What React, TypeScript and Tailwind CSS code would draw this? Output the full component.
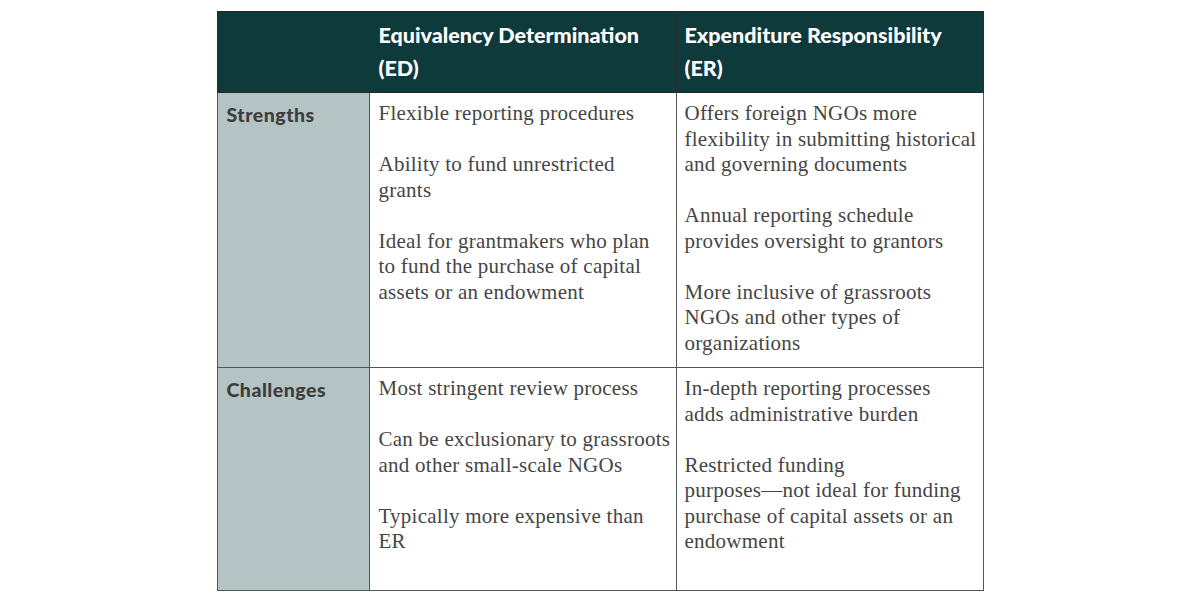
const header = ["Equivalency Determination", "(ED)"];

type Row = { label: string; ed: string[][]; er: string[][]; height: string };

const rows: Row[] = [
    {
        label: "Strengths",
        height: "h-[275px]",
        ed: [
            ["Flexible reporting procedures"],
            ["Ability to fund unrestricted", "grants"],
            [
                "Ideal for grantmakers who plan",
                "to fund the purchase of capital",
                "assets or an endowment",
            ],
        ],
        er: [
            [
                "Offers foreign NGOs more",
                "flexibility in submitting historical",
                "and governing documents",
            ],
            ["Annual reporting schedule", "provides oversight to grantors"],
            [
                "More inclusive of grassroots",
                "NGOs and other types of",
                "organizations",
            ],
        ],
    },
    {
        label: "Challenges",
        height: "h-[223px]",
        ed: [
            ["Most stringent review process"],
            ["Can be exclusionary to grassroots", "and other small-scale NGOs"],
            ["Typically more expensive than", "ER"],
        ],
        er: [
            ["In-depth reporting processes", "adds administrative burden"],
            [
                "Restricted funding",
                "purposes\u2014not ideal for funding",
                "purchase of capital assets or an",
                "endowment",
            ],
        ],
    },
];

function Paragraphs({ items }: { items: string[][] }) {
    return (
        <div className="flex flex-col gap-[25.5px]">
            {items.map((lines, i) => (
                <p key={i}>
                    {lines.map((line, j) => (
                        <span key={j} className="block whitespace-nowrap">
                            {line}
                        </span>
                    ))}
                </p>
            ))}
        </div>
    );
}

export default function App() {
    return (
        <div className="w-[1200px] h-[600px] bg-white pt-[11px]">
            <table className="mx-auto w-[766px] table-fixed border-collapse">
                <colgroup>
                    <col className="w-[152px]" />
                    <col className="w-[307px]" />
                    <col className="w-[307px]" />
                </colgroup>
                <thead>
                    <tr className="h-[81px] bg-[#0f3a3c] text-white text-left font-['Lato',sans-serif] font-black text-[21.5px] leading-[33px]">
                        <th className="border border-[#2b2b2b]" />
                        <th className="border border-[#2b2b2b] px-[9px] align-middle font-black">
                            {header[0]}
                            <br />
                            {header[1]}
                        </th>
                        <th className="border border-[#2b2b2b] px-[8px] align-middle font-black">
                            Expenditure Responsibility
                            <br />
                            (ER)
                        </th>
                    </tr>
                </thead>
                <tbody>
                    {rows.map((row) => (
                        <tr key={row.label} className={row.height}>
                            <td className="border border-[#555] bg-[#b4c3c3] align-top px-[9px] pt-[9px] font-['Lato',sans-serif] font-black text-[19.5px] tracking-[0.5px] leading-[25.5px] text-[#3d3d3d]">
                                {row.label}
                            </td>
                            <td className="border border-[#555] align-top px-[9px] pt-[8px] font-['Liberation_Serif',serif] text-[21px] tracking-[0.25px] leading-[25.5px] text-[#454545]">
                                <Paragraphs items={row.ed} />
                            </td>
                            <td className="border border-[#555] align-top px-[8px] pt-[8px] font-['Liberation_Serif',serif] text-[21px] tracking-[0.25px] leading-[25.5px] text-[#454545]">
                                <Paragraphs items={row.er} />
                            </td>
                        </tr>
                    ))}
                </tbody>
            </table>
        </div>
    );
}
